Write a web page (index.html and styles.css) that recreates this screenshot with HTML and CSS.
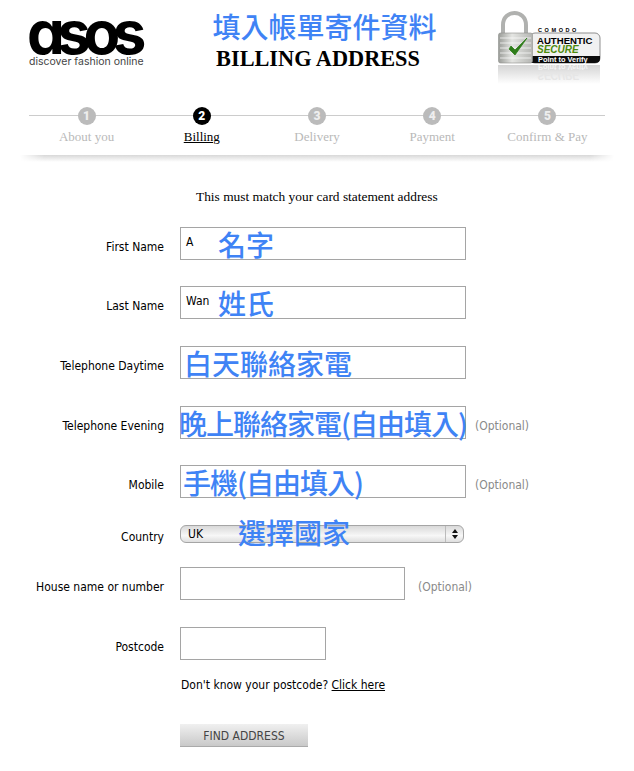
FILE: index.html
```html
<!DOCTYPE html>
<html lang="en">
  <head>
    <meta charset="UTF-8" />
    <title>Billing Address</title>
    <link rel="stylesheet" href="styles.css">
  </head>
  <body>
    <div class="page">
      <div class="header">
        <div class="logo">
          <div class="logo-word">asos</div>
          <div class="logo-tag">discover fashion online</div>
        </div>
        <div class="title">
          <div class="note title-note">填入帳單寄件資料</div>
          <h1>BILLING ADDRESS</h1>
        </div>
        <svg class="badge" width="104" height="80" viewBox="0 0 104 80">
          <defs>
            <linearGradient id="lock" x1="0" y1="0" x2="1" y2="0">
              <stop offset="0" stop-color="#9a9c98" />
              <stop offset="0.4" stop-color="#e4e5e2" />
              <stop offset="1" stop-color="#b4b5b2" />
            </linearGradient>
            <linearGradient id="fade" x1="0" y1="0" x2="0" y2="1">
              <stop offset="0" stop-color="#d4d4d4" />
              <stop offset="1" stop-color="#ffffff" />
            </linearGradient>
          </defs>
          <path d="M5 29V20C5 4 28 4 28 20V29" fill="none" stroke="#b0b1af" stroke-width="4" />
          <rect x="32" y="28" width="70" height="30" rx="5" fill="#f1f1f1" stroke="#8f8f8f" />
          <path d="M33 51H102V54Q102 58 97 58H33Z" fill="#0b0b0b" />
          <rect x="0.5" y="28" width="34" height="30" rx="2" fill="url(#lock)" stroke="#8d8e8b" stroke-width="0.6" />
          <path d="M2 33H33M2 38H33M2 43H33M2 48H33M2 53H33" stroke="#fff" stroke-width="1.2" opacity="0.7" />
          <path d="M11 44L17 50L29 33L17 45L13 41Z" fill="#2f7d1a" stroke="#2f7d1a" stroke-width="0.8" />
          <text x="40" y="27" class="badge-comodo">COMODO</text>
          <text x="39" y="39" class="badge-auth">AUTHENTIC</text>
          <text x="39" y="48" class="badge-secure">SECURE</text>
          <text x="40" y="57" class="badge-point">Point to Verify</text>
          <rect x="0" y="60" width="102" height="19" fill="url(#fade)" />
          <text x="40" y="-60" class="badge-ghost-point" transform="scale(1 -1)">Point to Verify</text>
          <text x="39" y="-67" class="badge-ghost" transform="scale(1 -1)">SECURE</text>
        </svg>
      </div>

      <div class="steps">
        <div class="step"><span class="num">1</span><span class="step-name">About you</span></div>
        <div class="step current"><span class="num">2</span><span class="step-name">Billing</span></div>
        <div class="step"><span class="num">3</span><span class="step-name">Delivery</span></div>
        <div class="step"><span class="num">4</span><span class="step-name">Payment</span></div>
        <div class="step"><span class="num">5</span><span class="step-name">Confirm &amp; Pay</span></div>
      </div>
      <div class="steps-shadow"></div>

      <p class="intro">This must match your card statement address</p>

      <div class="form">
        <div class="row row-first">
          <label>First Name</label>
          <div class="field wide"><span class="value">A</span><span class="note">名字</span></div>
        </div>
        <div class="row row-last">
          <label>Last Name</label>
          <div class="field wide"><span class="value">Wan</span><span class="note">姓氏</span></div>
        </div>
        <div class="row row-day">
          <label>Telephone Daytime</label>
          <div class="field wide"><span class="note note-day">白天聯絡家電</span></div>
        </div>
        <div class="row row-eve">
          <label>Telephone Evening</label>
          <div class="field wide"><span class="note note-tight note-over">晚上聯絡家電(自由填入)</span></div>
          <span class="optional">(Optional)</span>
        </div>
        <div class="row row-mob">
          <label>Mobile</label>
          <div class="field wide"><span class="note note-tight note-mob">手機(自由填入)</span></div>
          <span class="optional">(Optional)</span>
        </div>
        <div class="row row-country">
          <label>Country</label>
          <div class="select">
            <span class="select-value">UK</span>
            <span class="note select-note">選擇國家</span>
            <span class="select-arrows"><i class="up"></i><i class="down"></i></span>
          </div>
        </div>
        <div class="row row-house">
          <label>House name or number</label>
          <div class="field mid"></div>
          <span class="optional">(Optional)</span>
        </div>
        <div class="row row-post">
          <label>Postcode</label>
          <div class="field small"></div>
        </div>
        <p class="postcode-help">Don't know your postcode? <a href="#">Click here</a></p>
        <button class="find-btn">FIND ADDRESS</button>
      </div>
    </div>
  </body>
</html>
```

FILE: styles.css
```css
body {
  margin: 0;
  background: #fff;
  color: #000;
  font-family: "DejaVu Sans Condensed", "DejaVu Sans", Arial, sans-serif;
  font-size: 12px;
}

.page {
  width: 634px;
  height: 771px;
  overflow: hidden;
}

.note {
  color: #3f83f5;
  font-family: "Noto Sans CJK TC", "Noto Sans", sans-serif;
  font-size: 28px;
  font-weight: 500;
  line-height: 32px;
  white-space: nowrap;
}

.note-tight {
  letter-spacing: -1px;
}

/* header */
.header {
  display: flex;
  padding: 10px 0 0 29px;
  height: 96px;
  box-sizing: border-box;
}

.logo {
  width: 114px;
  padding-top: 1px;
}

.logo-word {
  font-family: "Inter", sans-serif;
  font-feature-settings: "cv11";
  font-weight: 700;
  font-size: 60px;
  line-height: 43px;
  letter-spacing: -7.5px;
  margin-left: -2px;
  color: #000;
  height: 45px;
}

.logo-tag {
  font-family: "Inter", sans-serif;
  font-size: 10.5px;
  line-height: 12px;
  color: #444;
  white-space: nowrap;
}

.title {
  width: 350px;
  text-align: center;
}

.title-note {
  padding-left: 13px;
}

h1 {
  margin: 3px 0 0;
  font-family: "Liberation Serif", serif;
  font-size: 22.3px;
  line-height: 28px;
  font-weight: bold;
}

.badge {
  margin: -5px 0 0 5px;
}

.badge-comodo {
  font: bold 5.5px "Liberation Sans", sans-serif;
  letter-spacing: 2.6px;
}

.badge-auth {
  font: bold 9.6px "Liberation Sans", sans-serif;
}

.badge-secure {
  font: italic bold 10px "Liberation Sans", sans-serif;
  fill: #4c8a0c;
}

.badge-point {
  font: bold 7.4px "Liberation Sans", sans-serif;
  fill: #fff;
}

.badge-ghost {
  font: italic bold 10px "Liberation Sans", sans-serif;
  fill: #e6e6e6;
}

.badge-ghost-point {
  font: bold 7.4px "Liberation Sans", sans-serif;
  fill: #f4f4f4;
}

/* progress steps */
.steps {
  display: flex;
  position: relative;
  margin: 0 29px;
  height: 59px;
  padding-top: 11px;
  box-sizing: border-box;
}

.steps::before {
  content: "";
  position: absolute;
  left: 0;
  right: 0;
  top: 19px;
  height: 1px;
  background: #ccc;
}

.step {
  flex: 1;
  display: flex;
  flex-direction: column;
  align-items: center;
  position: relative;
  color: #b9b9b9;
  font-family: "Liberation Serif", serif;
  font-size: 13px;
}

.num {
  width: 18px;
  height: 18px;
  border-radius: 50%;
  background: #bbb;
  color: #eee;
  font-family: "Roboto", sans-serif;
  font-weight: 900;
  font-size: 12px;
  line-height: 18px;
  text-align: center;
  margin-bottom: 4px;
}

.step-name {
  line-height: 15px;
  white-space: nowrap;
}

.current {
  color: #000;
}

.current .num {
  background: #000;
  color: #fff;
}

.current .step-name {
  text-decoration: underline;
}

.steps-shadow {
  height: 7px;
  margin: 0 20px;
  background: linear-gradient(#d8d8d8, #fff);
  -webkit-mask-image: linear-gradient(90deg, transparent, #000 24px, #000 calc(100% - 24px), transparent);
  mask-image: linear-gradient(90deg, transparent, #000 24px, #000 calc(100% - 24px), transparent);
}

.intro {
  margin: 26px 0 0 196px;
  font-family: "Liberation Serif", serif;
  font-size: 13.4px;
  line-height: 18px;
}

/* form */
.form {
  padding-top: 21px;
}

.row {
  display: flex;
  align-items: center;
}

.row label {
  width: 164px;
  text-align: right;
  margin-right: 16px;
  flex-shrink: 0;
  position: relative;
  top: 3px;
}

.field {
  display: flex;
  align-items: center;
  box-sizing: border-box;
  height: 33px;
  border: 1px solid #a5a5a5;
  padding-left: 5px;
}

.wide {
  width: 286px;
}

.mid {
  width: 225px;
}

.small {
  width: 146px;
}

.value {
  width: 32px;
  margin-top: -3px;
}

.note-day {
  margin-left: -2px;
}

.note-over {
  margin-left: -7px;
}

.note-mob {
  margin-left: -3px;
}

.optional {
  color: #8a8a8a;
  margin: 6px 0 0 9px;
}

.row-first {
  margin-bottom: 26px;
}

.row-last {
  margin-bottom: 27px;
}

.row-day {
  margin-bottom: 27px;
}

.row-eve {
  margin-bottom: 26px;
}

.row-mob {
  margin-bottom: 27px;
}

.row-country {
  margin-bottom: 24px;
}

.row-house {
  margin-bottom: 27px;
}

.row-house .optional {
  margin-left: 13px;
}

.select {
  display: flex;
  align-items: center;
  box-sizing: border-box;
  width: 284px;
  height: 18px;
  border: 1px solid #a5a5a5;
  border-radius: 6px;
  background: linear-gradient(#d9d9d9, #f7f7f7 60%, #dedede);
  padding-left: 7px;
  position: relative;
}

.select-value {
  width: 50px;
}

.select-note {
  margin-top: -4px;
  height: 18px;
  line-height: 18px;
}

.select-arrows {
  position: absolute;
  right: 0;
  top: 0;
  bottom: 0;
  width: 17px;
  border-left: 1px solid #bbb;
  display: flex;
  flex-direction: column;
  align-items: center;
  justify-content: center;
  gap: 2px;
}

.select-arrows i {
  width: 0;
  height: 0;
  border-left: 3px solid transparent;
  border-right: 3px solid transparent;
}

.select-arrows .up {
  border-bottom: 4px solid #111;
}

.select-arrows .down {
  border-top: 4px solid #111;
}

.postcode-help {
  margin: 17px 0 0 181px;
  line-height: 16px;
}

.postcode-help a {
  color: #000;
}

.find-btn {
  display: block;
  margin: 31px 0 0 180px;
  width: 128px;
  height: 23px;
  border: none;
  border-bottom: 1px solid #aaa;
  background: linear-gradient(#f0f0f0, #c9c9c9);
  color: #444;
  font-family: inherit;
  font-size: 12px;
  padding: 1px 0 0;
}
```
